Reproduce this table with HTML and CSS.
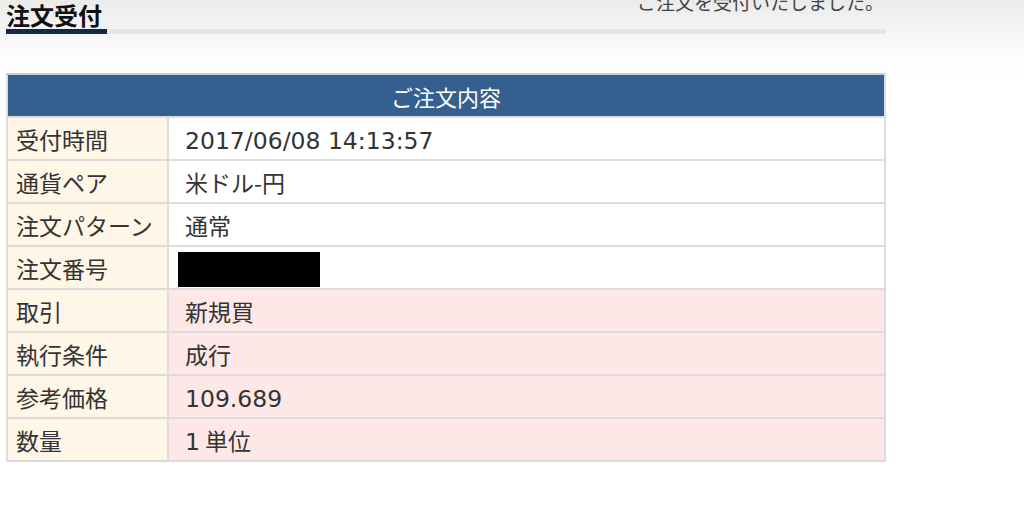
FILE: index.html
```html
<!DOCTYPE html>
<html lang="ja">
<head>
<meta charset="utf-8">
<title>注文受付</title>
<link rel="stylesheet" href="styles.css">
</head>
<body>
<div class="page">
  <div class="head">
    <h1 class="title">注文受付</h1>
    <p class="message">ご注文を受付いたしました。</p>
  </div>
  <table class="order">
    <thead>
      <tr><th colspan="2">ご注文内容</th></tr>
    </thead>
    <tbody>
      <tr><td class="label">受付時間</td><td class="value"><span class="num">2017/06/08 14:13:57</span></td></tr>
      <tr><td class="label">通貨ペア</td><td class="value">米ドル-円</td></tr>
      <tr><td class="label">注文パターン</td><td class="value">通常</td></tr>
      <tr><td class="label">注文番号</td><td class="value"><span class="redact"></span></td></tr>
      <tr class="pink"><td class="label">取引</td><td class="value">新規買</td></tr>
      <tr class="pink"><td class="label">執行条件</td><td class="value">成行</td></tr>
      <tr class="pink"><td class="label">参考価格</td><td class="value"><span class="num">109.689</span></td></tr>
      <tr class="pink"><td class="label">数量</td><td class="value"><span class="num">1</span> 単位</td></tr>
    </tbody>
  </table>
</div>
</body>
</html>
```

FILE: styles.css
```css
html, body {
  margin: 0;
  padding: 0;
}
body {
  background: linear-gradient(to bottom, #ebebeb 0, #fdfdfd 60px, #ffffff 80px);
  font-family: "Noto Sans CJK JP", sans-serif;
  color: #333;
  height: 516px;
  overflow: hidden;
}
.page {
  width: 880px;
  margin-left: 6px;
}
.head {
  display: flex;
  justify-content: space-between;
  align-items: flex-start;
  border-bottom: 5px solid #e6e6e6;
  height: 29px;
}
.title {
  margin: 0;
  font-weight: 700;
  font-size: 24px;
  line-height: 29px;
  color: #111;
  width: 101px;
  white-space: nowrap;
  border-bottom: 5px solid #13284a;
}
.message {
  margin: -12px 2px 0 0;
  font-size: 19px;
  line-height: 28px;
  color: #444;
  white-space: nowrap;
}
.order {
  margin-top: 39px;
  width: 880px;
  border-collapse: collapse;
  font-size: 23px;
}
.order th,
.order td {
  border: 2px solid #dcdcdc;
  height: 41px;
  padding: 0;
}
.order th {
  background: #355f8f;
  color: #fff;
  font-weight: 400;
  font-size: 22px;
  height: 41px;
  border-top-color: #c8cdd4;
}
.label {
  width: 151px;
  background: #fff6e7;
  padding-left: 8px !important;
  white-space: nowrap;
}
.value {
  background: #fff;
  padding-left: 16px !important;
}
.pink .value {
  background: #fee7e7;
}
.num {
  font-family: "DejaVu Sans", sans-serif;
  font-size: 23.5px;
}
.redact {
  display: inline-block;
  width: 142px;
  height: 35px;
  background: #000;
  margin-left: -7px;
  vertical-align: middle;
}
```
